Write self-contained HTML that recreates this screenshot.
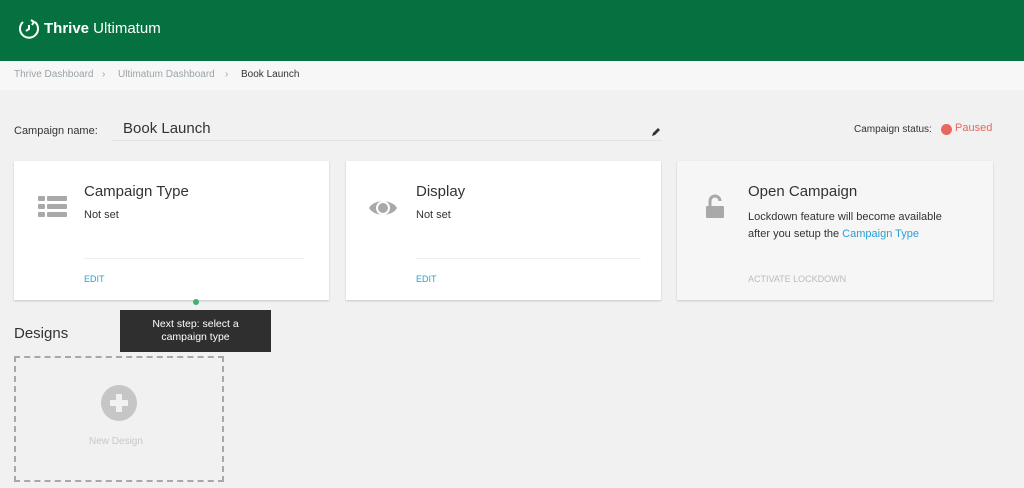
<!DOCTYPE html>
<html><head><style>
*{box-sizing:border-box;margin:0;padding:0}
body{width:1024px;height:488px;overflow:hidden;background:#f1f1f1;font-family:"Liberation Sans",sans-serif;color:#333;position:relative}
.hdr{position:absolute;left:0;top:0;width:1024px;height:61px;background:#067140}
.bc{position:absolute;top:61px;left:0;width:1024px;height:29px;background:#f7f7f7;font-size:10px;color:#9aa3a8}
.bc span{position:absolute;top:8px}
.card{position:absolute;top:161px;height:139px;background:#fff;box-shadow:0 1px 2px rgba(0,0,0,.18)}
.t{position:absolute;font-size:15px;color:#333}
.s{position:absolute;font-size:11px;color:#333}
.e{position:absolute;font-size:9px;color:#2a9fd6}
.ln{position:absolute;height:1px;background:#eee}
</style></head><body>
<div class="hdr">
<svg style="position:absolute;left:17px;top:17px" width="24" height="24" viewBox="0 0 24 24" fill="none" stroke="#fff" stroke-width="2"><path d="M6 5A9 9 0 1 0 18 5"/><path d="M12 8v4l-3 2"/><path d="M14 3l3 2-2 3"/></svg>
<div style="position:absolute;left:44px;top:20px;color:#fff;font-size:15px"><b>Thrive</b> Ultimatum</div>
</div>
<div class="bc"><span style="left:14px">Thrive Dashboard</span><span style="left:102px">›</span><span style="left:118px">Ultimatum Dashboard</span><span style="left:225px">›</span><span style="left:241px;color:#333">Book Launch</span></div>
<div style="position:absolute;left:14px;top:125px;font-size:11px">Campaign name:</div>
<div style="position:absolute;left:123px;top:120px;font-size:15px">Book Launch</div>
<div class="ln" style="left:112px;top:140px;width:550px;background:#e2e2e2"></div>
<svg style="position:absolute;left:651px;top:127px" width="10" height="10" viewBox="0 0 10 10"><path d="M1 9l1-3 5-5 2 2-5 5z" fill="#333"/></svg>
<div style="position:absolute;left:854px;top:124px;font-size:10px">Campaign status:</div>
<div style="position:absolute;left:941px;top:124px;width:11px;height:11px;border-radius:50%;background:#e8685d"></div>
<div style="position:absolute;left:955px;top:122px;font-size:11px;color:#e8685d">Paused</div>

<div class="card" style="left:14px;width:315px">
<svg style="position:absolute;left:24px;top:35px" width="29" height="22"><g fill="#a9a9a9"><rect x="0" y="0" width="7" height="5" rx="1"/><rect x="9" y="0" width="20" height="5" rx="1"/><rect x="0" y="8" width="7" height="5" rx="1"/><rect x="9" y="8" width="20" height="5" rx="1"/><rect x="0" y="16" width="7" height="5" rx="1"/><rect x="9" y="16" width="20" height="5" rx="1"/></g></svg>
<div class="t" style="left:70px;top:22px">Campaign Type</div>
<div class="s" style="left:70px;top:48px">Not set</div>
<div class="ln" style="left:70px;top:97px;width:220px"></div>
<div class="e" style="left:70px;top:113px">EDIT</div>
</div>
<div class="card" style="left:346px;width:315px">
<svg style="position:absolute;left:22px;top:37px" width="30" height="20" viewBox="0 0 30 20"><path d="M1 10C6 1 24 1 29 10C24 19 6 19 1 10Z" fill="#a9a9a9"/><circle cx="15" cy="10" r="7" fill="#fff"/><circle cx="15" cy="10" r="5" fill="#a9a9a9"/></svg>
<div class="t" style="left:70px;top:22px">Display</div>
<div class="s" style="left:70px;top:48px">Not set</div>
<div class="ln" style="left:70px;top:97px;width:225px"></div>
<div class="e" style="left:70px;top:113px">EDIT</div>
</div>
<div class="card" style="left:677px;width:316px;background:#f6f6f6">
<svg style="position:absolute;left:28px;top:33px" width="20" height="25" viewBox="0 0 20 25"><path d="M5 12V7a5 5 0 0 1 10 0" fill="none" stroke="#a9a9a9" stroke-width="3"/><rect x="1" y="12" width="18" height="12" rx="1" fill="#a9a9a9"/></svg>
<div class="t" style="left:71px;top:22px">Open Campaign</div>
<div class="s" style="left:71px;top:48px;line-height:17px">Lockdown feature will become available<br>after you setup the <span style="color:#2a9fd6">Campaign Type</span></div>
<div class="e" style="left:71px;top:113px;color:#bbb">ACTIVATE LOCKDOWN</div>
</div>

<div style="position:absolute;left:193px;top:299px;width:6px;height:6px;border-radius:50%;background:#3cb371"></div>
<div style="position:absolute;left:120px;top:310px;width:151px;height:42px;background:#2f2f2f;color:#fff;font-size:10.5px;text-align:center;padding-top:8px;line-height:13px">Next step: select a<br>campaign type</div>
<div style="position:absolute;left:14px;top:325px;font-size:15px">Designs</div>
<div style="position:absolute;left:14px;top:356px;width:210px;height:126px;border:2px dashed #a8a8a8"></div>
<svg style="position:absolute;left:101px;top:385px" width="36" height="36" viewBox="0 0 36 36"><circle cx="18" cy="18" r="18" fill="#c6c6c6"/><path d="M18 9v18M9 18h18" stroke="#f1f1f1" stroke-width="6"/></svg>
<div style="position:absolute;left:89px;top:436px;font-size:10px;color:#c8c8c8">New Design</div>
</body></html>
